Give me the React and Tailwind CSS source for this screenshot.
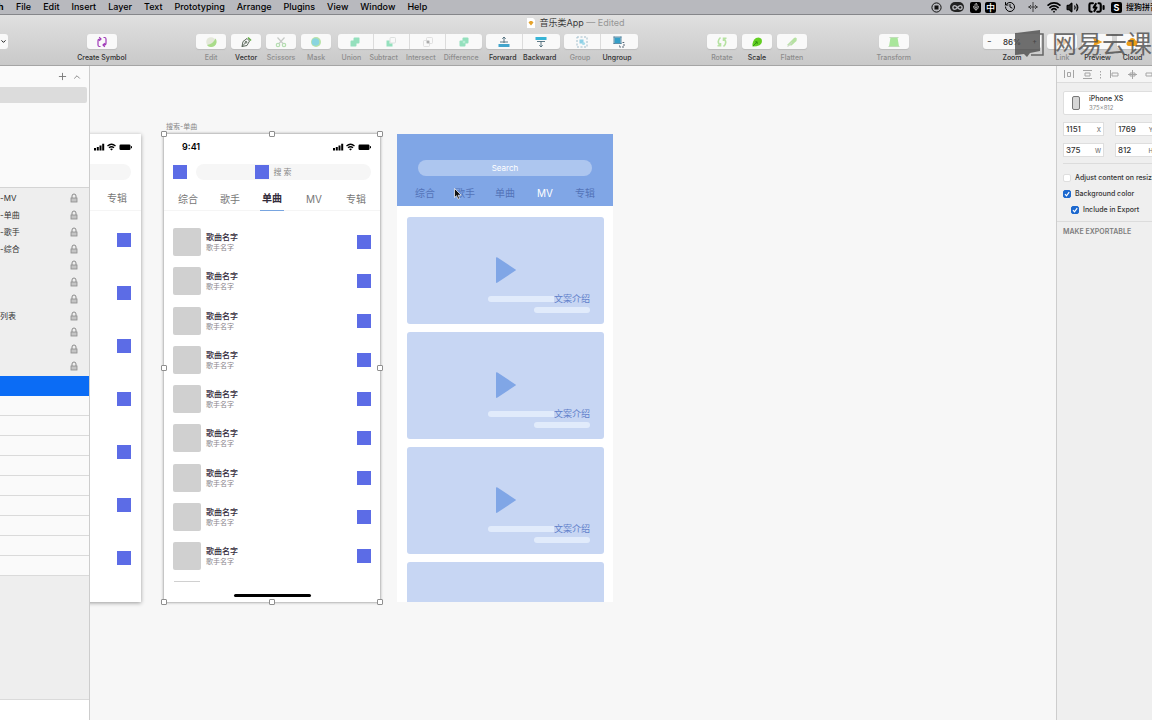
import React from 'react';
import { Wifi, Volume2, History, Plus, ChevronUp, ChevronDown, Mic, BatteryCharging, Infinity as InfinityIcon } from 'lucide-react';

const menus = ['File', 'Edit', 'Insert', 'Layer', 'Text', 'Prototyping', 'Arrange', 'Plugins', 'View', 'Window', 'Help'];
const layers = ['-MV', '-单曲', '-歌手', '-综合', '', '', '', '列表', '', '', ''];
const tabs = ['综合', '歌手', '单曲', 'MV', '专辑'];

const icons = {
  symbol: (
    <g fill="none" stroke="#a03ab8" strokeWidth="1.2">
      <path d="M4.5 10.5H3.5Q2 10.5 2 9V5Q2 3 4 3M3.2 1.2 5 3 3.2 4.8" />
      <path d="M7.5 1.5H8.5Q10 1.5 10 3V7Q10 9 8 9M8.8 7.2 7 9 8.8 10.8" />
    </g>
  ),
  edit: (
    <g>
      <circle cx="6" cy="6" r="4.8" fill="#e4e8da" />
      <path d="M10.5 2.5A5 5 0 1 1 2 9Q8 8 10.5 2.5Z" fill="#a9dc8a" />
    </g>
  ),
  vector: (
    <g fill="none" stroke="#4d5a4d" strokeWidth="0.9">
      <path d="M2 10.5 3 5.5 7 2.5 9.5 5 7 9.5ZM2 10.5 5.5 6.8" />
      <circle cx="6" cy="6.2" r="0.9" />
      <path d="M8 1.5 11 4.5" stroke="#65ad47" strokeWidth="1.6" />
    </g>
  ),
  scissors: (
    <g fill="none" stroke="#b5dfb1" strokeWidth="1.2">
      <circle cx="3" cy="9" r="1.7" />
      <circle cx="9" cy="9" r="1.7" />
      <path d="M4 7.5 9.5 1.5M8 7.5 2.5 1.5" stroke="#c6cac6" />
    </g>
  ),
  mask: (
    <g>
      <circle cx="6" cy="6" r="5" fill="#b8e3a8" />
      <circle cx="5.5" cy="6" r="3.8" fill="#8ad5df" />
    </g>
  ),
  union: <path d="M5.5 1.5H10Q10.5 1.5 10.5 2V6.5Q10.5 7.5 9.500 7.5H7.5V9.5Q7.5 10.5 6.5 10.5H2Q1.500 10.5 1.500 10V5.500Q1.500 4.500 2.500 4.500H4.500V2.500Q4.500 1.500 5.500 1.500Z" fill="#94e0bd" />,
  subtract: (
    <g>
      <rect x="5" y="1.5" width="5.5" height="5.5" rx="1" fill="none" stroke="#d5dbd8" strokeWidth="0.8" />
      <path d="M1.5 4.5H4.5V7.5H7.5V10.5H1.5Z" fill="#94e0bd" />
    </g>
  ),
  intersect: (
    <g fill="none" stroke="#d9d9d9" strokeWidth="0.8">
      <rect x="1.5" y="4.5" width="6" height="6" rx="1" />
      <rect x="4.5" y="1.5" width="6" height="6" rx="1" />
      <rect x="4.8" y="4.8" width="2.4" height="2.4" fill="#aaa" stroke="none" />
    </g>
  ),
  difference: (
    <g>
      <rect x="4.5" y="1.5" width="6" height="6" rx="1" fill="#94e0bd" />
      <rect x="1.5" y="4.5" width="6" height="6" rx="1" fill="#94e0bd" />
      <rect x="4.8" y="4.8" width="2.4" height="2.4" fill="#b7edd4" />
    </g>
  ),
  forward: (
    <g>
      <path d="M6 7V1M4.3 2.8 6 1 7.700 2.8M2 6H10" fill="none" stroke="#4b6a78" strokeWidth="0.9" />
      <path d="M.5 8h11v3H.5Z" fill="#42a5cc" />
    </g>
  ),
  backward: (
    <g>
      <path d="M.5 1h11v3H.5Z" fill="#38b4d6" />
      <path d="M2 5.5H10M6 5v6M4.3 9.2 6 11 7.7 9.2" fill="none" stroke="#4b6a78" strokeWidth="0.9" />
    </g>
  ),
  group: (
    <g>
      <rect x="1" y="1" width="10" height="10" fill="none" stroke="#9fbdcb" strokeDasharray="2 1.5" />
      <rect x="3.5" y="3.5" width="4" height="4" fill="#8dd0e6" />
      <circle cx="7.5" cy="7.5" r="1.6" fill="#a7dceb" />
    </g>
  ),
  ungroup: (
    <g>
      <rect x="1.5" y="1.5" width="6" height="5.5" fill="#349fc8" />
      <path d="M.5 1H8.5M.5 7.5H8.5M1 .5V8M8 .5V8" fill="none" stroke="#3c7593" strokeWidth="0.8" />
      <path d="M9.5 6.500H11V11H6.500V9" fill="none" stroke="#456" strokeWidth="0.9" strokeDasharray="2 1" />
    </g>
  ),
  rotate: (
    <g fill="none" stroke="#b6e2a2" strokeWidth="1.6">
      <path d="M4.5 1.5Q1 4.5 3 8L4.5 10M1.5 9.8H4.5V7" />
      <path d="M7.5 10.5Q11 7.5 9 4L7.5 2M10.5 2.2H7.5V5" />
    </g>
  ),
  scale: (
    <g>
      <path d="M1.5 10.5Q1 4.5 5 2Q8.5 .5 10.5 3Q12 7 8.5 9.2Q6 10.5 1.5 10.5Z" fill="#63cf22" />
      <path d="M2 10 6 6M4.2 5.8H6.2V8" fill="none" stroke="#2f8f10" strokeWidth="0.9" />
    </g>
  ),
  flatten: (
    <g>
      <path d="M1 9 8 2Q9.5 .8 10.8 2.5L10.5 5 5.5 9.5Z" fill="#b6e2a2" />
      <path d="M1.5 10.5 6 6.5" stroke="#ccd8c6" strokeWidth="1.2" />
    </g>
  ),
  transform: (
    <g>
      <path d="M2.5 1.5h7L11 10.5H1Z" fill="#a9e69b" />
      <path d="M1.5 1.5h9M.5 10.5h11" stroke="#c1dcba" />
    </g>
  ),
  link: <path d="M1 2 6 6 1 10ZM7 2 11 6 7 10Z" fill="#ecc9a0" />,
  preview: <path d="M2 1.5 11.5 6 2 10.5 3.5 6Z" fill="#f0a01c" />,
  cloud: <path d="M3 10Q0 9.5 .5 7Q1 5 3 5Q3.5 2 6.5 2Q9 2 9.5 4.5Q12 5 11.5 7.5Q11 10 9 10Z" fill="#eb9c17" />,
};

const ToolIcon = ({ name }) => (
  <svg viewBox="0 0 12 12" className="h-3 w-3" aria-hidden="true">{icons[name]}</svg>
);

const Tool = ({ name, label, enabled = false, wide = false }) => (
  <div className={`flex shrink-0 flex-col items-center gap-1 ${wide ? 'w-[52px]' : 'w-[35px]'}`}>
    <button aria-label={label} className="flex h-[15px] w-[30px] items-center justify-center rounded-[3px] bg-[#f9f9f9] shadow-[0_1px_1px_#bdbdbd]">
      <ToolIcon name={name} />
    </button>
    <span className={`text-[7px] leading-[10px] font-medium whitespace-nowrap ${enabled ? 'text-[#303030]' : 'text-[#8c8c8c]'}`}>{label}</span>
  </div>
);

const ToolGroup = ({ items, enabled = [] }) => (
  <div className={`ml-1 flex shrink-0 flex-col gap-1 ${items.length > 2 ? 'w-36' : 'w-[74px]'}`}>
    <div className="flex h-[15px] divide-x divide-[#dcdcdc] overflow-hidden rounded-[3px] bg-[#f9f9f9] shadow-[0_1px_1px_#bdbdbd]">
      {items.map((label) => (
        <button key={label} aria-label={label} className="flex flex-1 items-center justify-center">
          <ToolIcon name={label.toLowerCase()} />
        </button>
      ))}
    </div>
    <div className={`flex text-[7px] leading-[10px] font-medium ${items.length > 2 ? 'justify-between pr-[3px] pl-1' : 'justify-around'}`}>
      {items.map((label) => (
        <span key={label} className={enabled.includes(label) ? 'text-[#303030]' : 'text-[#8c8c8c]'}>{label}</span>
      ))}
    </div>
  </div>
);

const MenuBar = () => (
  <nav className="flex h-[15px] shrink-0 items-center overflow-hidden border-b border-[#85868a] bg-[#b8b9be] text-[9px] font-medium text-black">
    <span className="-ml-[2px] w-[18px] shrink-0 font-bold">h</span>
    <div className="flex gap-3">
      {menus.map((menu) => (
        <button key={menu}>{menu}</button>
      ))}
    </div>
    <div className="ml-auto flex shrink-0 items-center">
      <svg viewBox="0 0 11 11" className="mr-2 h-[11px] w-[11px]">
        <circle cx="5.5" cy="5.5" r="4.6" fill="none" stroke="#111" />
        <rect x="3.5" y="3.5" width="4" height="4" fill="#111" />
      </svg>
      <span className="mr-[6px] flex h-[10px] w-[14px] items-center justify-center rounded-full bg-[#222] text-[#b8b9be]">
        <InfinityIcon size={11} strokeWidth={3} />
      </span>
      <span className="mr-1 flex h-[11px] w-[11px] items-center justify-center rounded-xs bg-black text-white">
        <Mic size={8} />
      </span>
      <span className="mr-2 flex h-[11px] w-[11px] items-center justify-center rounded-xs bg-black text-[9px] leading-none text-white">中</span>
      <History size={12} className="mr-3" />
      <svg viewBox="0 0 10 10" className="mr-[9px] h-[10px] w-[10px]">
        <path d="M5 0V10M0 5H10M3 3 1 5 3 7M7 3 9 5 7 7" fill="none" stroke="#333" strokeWidth="0.9" />
      </svg>
      <Wifi size={14} strokeWidth={3} className="mr-[5px]" />
      <Volume2 size={13} fill="#222" className="mr-[9px]" />
      <BatteryCharging size={17} strokeWidth={3} className="mr-[6px]" />
      <span className="mr-1 flex h-[11px] w-[11px] items-center justify-center rounded-xs bg-black text-[9px] leading-none font-bold text-white">S</span>
      <span className="w-[26px] overflow-hidden text-[8px] whitespace-nowrap">搜狗拼音</span>
    </div>
  </nav>
);

const Toolbar = () => (
  <header className="relative flex h-[51px] shrink-0 flex-col border-b border-[#a5a5a5] bg-linear-to-b from-[#e0e0e0] to-[#c9c9c9]">
    <div className="mb-[3px] flex h-4 items-center justify-center gap-1 text-[9px] text-[#3a3a3a]">
      <svg viewBox="0 0 8 10" className="h-[10px] w-2">
        <path d="M0 0H6L8 2V10H0Z" fill="#fff" />
        <path d="M1.5 4.5 3 3H5L6.5 4.5 4 7.5Z" fill="#e5a32d" />
      </svg>
      <h1>音乐类App <span className="text-[#969696]">— Edited</span></h1>
    </div>
    <div className="flex items-start">
      <button aria-label="Insert" className="flex h-[15px] w-2 shrink-0 items-center overflow-hidden rounded-r-[3px] bg-[#f9f9f9]">
        <ChevronDown size={7} strokeWidth={3} className="shrink-0" />
      </button>
      <div className="flex-68" />
      <Tool name="symbol" label="Create Symbol" enabled wide />
      <div className="flex-66" />
      <Tool name="edit" label="Edit" />
      <Tool name="vector" label="Vector" enabled />
      <Tool name="scissors" label="Scissors" />
      <Tool name="mask" label="Mask" />
      <ToolGroup items={['Union', 'Subtract', 'Intersect', 'Difference']} />
      <ToolGroup items={['Forward', 'Backward']} enabled={['Forward', 'Backward']} />
      <ToolGroup items={['Group', 'Ungroup']} enabled={['Ungroup']} />
      <div className="flex-67" />
      <Tool name="rotate" label="Rotate" />
      <Tool name="scale" label="Scale" enabled />
      <Tool name="flatten" label="Flatten" />
      <div className="flex-67" />
      <Tool name="transform" label="Transform" />
      <div className="flex-72" />
      <div className="flex w-[58px] shrink-0 flex-col items-center gap-1 text-[7px] leading-[10px] font-medium text-[#303030]">
        <div className="flex h-[15px] w-full items-center justify-between rounded-[3px] bg-[#f9f9f9] px-1 shadow-[0_1px_1px_#bdbdbd]">
          <button aria-label="Zoom out">−</button>
          <span className="text-[8px]">86%</span>
          <button aria-label="Zoom in">+</button>
        </div>
        <span>Zoom</span>
      </div>
      <div className="w-1 shrink-0" />
      <Tool name="link" label="Link" />
      <Tool name="preview" label="Preview" enabled />
      <Tool name="cloud" label="Cloud" enabled />
      <div className="w-[2px] shrink-0" />
    </div>
    {/* video watermark */}
    <div className="pointer-events-none absolute top-[14px] right-0 flex items-center gap-2 text-[#4c4c4c] opacity-80">
      <svg viewBox="0 0 29 30" className="h-[30px] w-[29px]">
        <path d="M0 4 25 1V22L15 24 12 28 9 25 0 26Z" fill="currentColor" />
        <path d="M25 5H28V26H16" fill="none" stroke="currentColor" strokeWidth="1.5" />
      </svg>
      <span className="text-[25px] leading-[30px] whitespace-nowrap">网易云课</span>
    </div>
  </header>
);

const LockIcon = () => (
  <svg viewBox="0 0 8 10" className="h-[10px] w-2" aria-hidden="true">
    <path d="M2 5V3Q2 1 4 1Q6 1 6 3V5" fill="none" stroke="#8b8b8b" />
    <rect x="1" y="5" width="6" height="4" fill="#c4c4c4" stroke="#8b8b8b" strokeWidth="0.8" />
  </svg>
);

const LayerPanel = () => (
  <aside className="flex w-[90px] shrink-0 flex-col border-r border-[#cdcdcd] bg-[#eeeeee] text-[8px] text-[#333]">
    <div className="h-[122px] shrink-0 border-b border-[#d4d4d4] bg-[#fafafa]">
      <div className="flex h-[21px] items-center justify-end gap-1 pr-[7px] text-[#777]">
        <button aria-label="Add page"><Plus size={11} strokeWidth={2} /></button>
        <button aria-label="Collapse pages"><ChevronUp size={10} strokeWidth={2} /></button>
      </div>
      <div className="mr-[2px] h-4 rounded-r-xs bg-[#dcdcdc]" />
    </div>
    <ul className="flex h-[188px] shrink-0 flex-col py-[2px]">
      {layers.map((name, i) => (
        <li key={i} className="flex flex-1 items-center justify-between pr-[11px]">
          <span>{name}</span>
          <LockIcon />
        </li>
      ))}
    </ul>
    <div className="h-5 shrink-0 bg-[#0b6cf5]" />
    {[...Array(9)].map((_, i) => (
      <div key={i} className="h-5 shrink-0 border-b border-[#dadada] bg-[#fafafa]" />
    ))}
    <div className="h-[124px] shrink-0 border-b border-[#dadada]" />
    <div className="flex-1 bg-white" />
  </aside>
);

const StatusIcons = () => (
  <svg viewBox="0 0 38 8" className="h-2 w-[38px]" aria-hidden="true">
    <path d="M0 5h2v2.5H0ZM2.8 4h2v3.5h-2ZM5.5 2.5h2v5h-2ZM8.2 .8h2v6.7h-2Z" />
    <path d="M13.5 3Q17.5-.5 21.5 3M15 4.8Q17.5 2.6 20 4.8" fill="none" stroke="#000" strokeWidth="1.3" />
    <path d="M16 6 17.5 7.5 19 6Q17.5 5 16 6Z" />
    <rect x="25.5" y="1.5" width="11" height="5.5" rx="1.2" />
    <rect x="37" y="3.2" width="1" height="2" />
  </svg>
);

const Placeholder = () => <div className="h-[14px] w-[14px] shrink-0 bg-[#5c6ce6]" />;

const AlbumArtboard = () => (
  <div className="absolute top-[68px] -left-[166px] h-[468px] w-[217px] bg-white shadow-[0_1px_4px_#999]">
    <div className="flex h-[26px] items-center justify-end pr-[9px]">
      <StatusIcons />
    </div>
    <div className="mt-1 mr-[10px] h-4 rounded-full bg-[#f6f6f6]" />
    <div className="mt-[7px] flex h-6 items-center justify-end border-b border-[#f5f5f5] pr-[14px] text-[10px] text-[#777]">专辑</div>
    <div className="mt-[22px] flex flex-col items-end gap-[39px] pr-[10px]">
      {[...Array(7)].map((_, i) => (
        <Placeholder key={i} />
      ))}
    </div>
  </div>
);

const handles = [
  '-top-[3px] -left-[3px]', '-top-[3px] left-[105px]', '-top-[3px] -right-[3px]',
  'top-[231px] -left-[3px]', 'top-[231px] -right-[3px]',
  '-bottom-[3px] -left-[3px]', '-bottom-[3px] left-[105px]', '-bottom-[3px] -right-[3px]',
];

const SongArtboard = () => (
  <div className="absolute top-[68px] left-[74px] h-[468px] w-[216px] bg-white shadow-[0_0_3px_#777]">
    <div className="flex h-[26px] items-center justify-between pr-[9px] pl-[18px] text-[9px] font-semibold">
      <span>9:41</span>
      <StatusIcons />
    </div>
    <div className="mt-1 flex items-center gap-[9px] pr-[9px] pl-[9px]">
      <Placeholder />
      <div className="flex h-4 flex-1 items-center justify-center gap-1 rounded-full bg-[#f6f6f6] pr-5 text-[8px] text-[#888]">
        <Placeholder />
        <span>搜 索</span>
      </div>
    </div>
    <div className="mt-[7px] grid h-6 grid-cols-5 justify-items-center border-b border-[#f5f5f5] px-[3px] text-[10px] text-[#777]">
      {tabs.map((tab) => (
        <button key={tab} className={tab === '单曲' ? 'h-6 border-b border-[#78a5e0] px-[2px] font-bold text-[#332b3b]' : 'h-6'}>{tab}</button>
      ))}
    </div>
    <div className="mt-[17px] flex h-[342px] flex-col justify-between pr-[9px] pl-[9px]">
      {[...Array(9)].map((_, i) => (
        <div key={i} className="flex items-center gap-[5px]">
          <div className="h-7 w-7 rounded-xs bg-[#d0d0d0]" />
          <div className="flex-1">
            <p className="text-[8px] leading-[12px] font-medium text-[#332b3b]">歌曲名字</p>
            <p className="text-[7px] leading-[10px] text-[#8a858c]">歌手名字</p>
          </div>
          <Placeholder />
        </div>
      ))}
    </div>
    <div className="mt-[11px] ml-[10px] h-px w-[26px] bg-[#d0d0d0]" />
    <div className="mx-auto mt-3 h-[3px] w-[77px] rounded-full bg-black" />
    {handles.map((place) => (
      <span key={place} className={`absolute h-[6px] w-[6px] rounded-[1px] border border-[#8f8f8f] bg-white ${place}`} />
    ))}
  </div>
);

const VideoCard = () => (
  <div className="flex h-[107px] shrink-0 flex-col rounded-[3px] bg-[#c7d6f3] pt-10 pr-[14px]">
    <svg viewBox="0 0 20 26" className="ml-[89px] h-[26px] w-5 shrink-0">
      <path d="M0 1Q0-.5 1.5 .6L19.5 12.5Q20.5 13 19.5 13.6L1.5 25.5Q0 26.5 0 25Z" fill="#80a6e6" />
    </svg>
    <div className="mt-2 flex h-4 items-center justify-end">
      <span className="h-[6px] w-[66px] rounded-l-full bg-[#e1ebfb]" />
      <span className="text-[9px] leading-[12px] whitespace-nowrap text-[#5f7fca]">文案介绍</span>
    </div>
    <span className="ml-auto h-[6px] w-14 shrink-0 rounded-full bg-[#e1ebfb]" />
  </div>
);

const VideoArtboard = () => (
  <div className="absolute top-[68px] left-[307px] h-[468px] w-[216px] overflow-hidden bg-white">
    <div className="h-[72px] bg-[#80a6e6] px-2 pt-[26px] text-[10px] text-[#5373b8]">
      <div className="mx-[13px] flex h-4 items-center justify-center rounded-full bg-[#adc6ef] text-[8px] text-white">Search</div>
      <div className="mt-[9px] grid h-4 grid-cols-5 items-center justify-items-center">
        {tabs.map((tab) => (
          <button key={tab} className={tab === 'MV' ? 'text-white' : ''}>{tab}</button>
        ))}
      </div>
    </div>
    <div className="flex flex-col gap-2 pt-[11px] pr-[9px] pl-[10px]">
      {[...Array(4)].map((_, i) => (
        <VideoCard key={i} />
      ))}
    </div>
  </div>
);

const Canvas = () => (
  <main className="relative min-w-0 flex-1 overflow-hidden bg-[#f7f7f7]">
    <AlbumArtboard />
    <span className="absolute top-[56px] left-[76px] text-[7px] leading-[10px] text-[#888]">搜索-单曲</span>
    <SongArtboard />
    <VideoArtboard />
    <svg viewBox="0 0 8 12" className="absolute top-[122px] left-[364px] h-3 w-2">
      <path d="M.5 .5V9.5L2.6 7.7 4 11.2 5.6 10.5 4.2 7.2H7.2Z" fill="#111" stroke="#fff" strokeWidth="0.7" />
    </svg>
  </main>
);

const Field = ({ label, value }) => (
  <label className="flex h-[14px] w-[41px] shrink-0 items-center border border-[#dedede] bg-white px-[2px] text-[8px]">
    <input defaultValue={value} className="w-0 min-w-0 flex-1 outline-none" />
    <span className="text-[6px] text-[#777]">{label}</span>
  </label>
);

const Check = ({ label, checked = false, nested = false }) => (
  <label className={`flex h-4 items-center gap-1 whitespace-nowrap ${nested ? 'pl-2' : ''}`}>
    <span className="relative flex h-2 w-2 shrink-0">
      <input type="checkbox" defaultChecked={checked} className="peer h-2 w-2 appearance-none rounded-xs border border-[#dedede] bg-white checked:border-[#1d69cf] checked:bg-[#1d69cf]" />
      <svg viewBox="0 0 8 8" className="pointer-events-none absolute inset-0 hidden h-2 w-2 peer-checked:block">
        <path d="M2 4.2 3.5 5.8 6.2 2.2" fill="none" stroke="#fff" strokeWidth="1.2" />
      </svg>
    </span>
    {label}
  </label>
);

const Inspector = () => (
  <aside className="w-24 shrink-0 overflow-hidden border-l border-[#cdcdcd] bg-[#efefef] text-[7px] font-medium text-[#333]">
    <div className="flex h-[17px] items-center border-b border-[#dcdcdc] bg-[#f5f5f5] pl-[7px]">
      <svg viewBox="0 0 88 10" className="h-[10px] w-[88px] shrink-0" fill="none" stroke="#a5a5a5">
        <path d="M.5 1V9M9.5 1V9M3.5 3.5h3v4h-3ZM19 1.5h9M19 9.5h9M21 4h5v3h-5ZM36.5 2v1.5M36.5 5v1.5M36.5 8v1.5M46.5 1V9M48 4h6v3h-6ZM64 5.5h9M68.5 1V10M66 4h5v3h-5ZM82 4h6v3h-6Z" />
      </svg>
    </div>
    <div className="pt-2 pl-[6px]">
      <div className="flex h-6 w-40 items-center gap-[9px] rounded-xs border border-[#dedede] bg-white pl-2">
        <div className="h-[14px] w-2 rounded-xs border border-[#777] bg-[#d6d6d6]" />
        <div>
          <p className="leading-[10px]">iPhone XS</p>
          <p className="text-[6px] leading-[8px] font-normal text-[#888]">375×812</p>
        </div>
      </div>
      <div className="mt-[7px] flex gap-[11px]">
        <Field label="X" value="1151" />
        <Field label="Y" value="1769" />
      </div>
      <div className="mt-[7px] flex gap-[11px]">
        <Field label="W" value="375" />
        <Field label="H" value="812" />
      </div>
      <div className="mt-[6px] border-t border-[#dcdcdc] pt-[6px]">
        <Check label="Adjust content on resize" />
        <Check label="Background color" checked />
        <Check label="Include in Export" checked nested />
      </div>
    </div>
    <h2 className="mt-[3px] border-t border-[#dcdcdc] pt-[5px] pl-[6px] leading-[10px] font-semibold whitespace-nowrap text-[#7d7d7d]">MAKE EXPORTABLE</h2>
  </aside>
);

const App = () => (
  <div className="flex h-screen flex-col overflow-hidden font-['Inter','Noto_Sans_CJK_SC',sans-serif]">
    <MenuBar />
    <Toolbar />
    <div className="flex min-h-0 flex-1">
      <LayerPanel />
      <Canvas />
      <Inspector />
    </div>
  </div>
);

export default App;
